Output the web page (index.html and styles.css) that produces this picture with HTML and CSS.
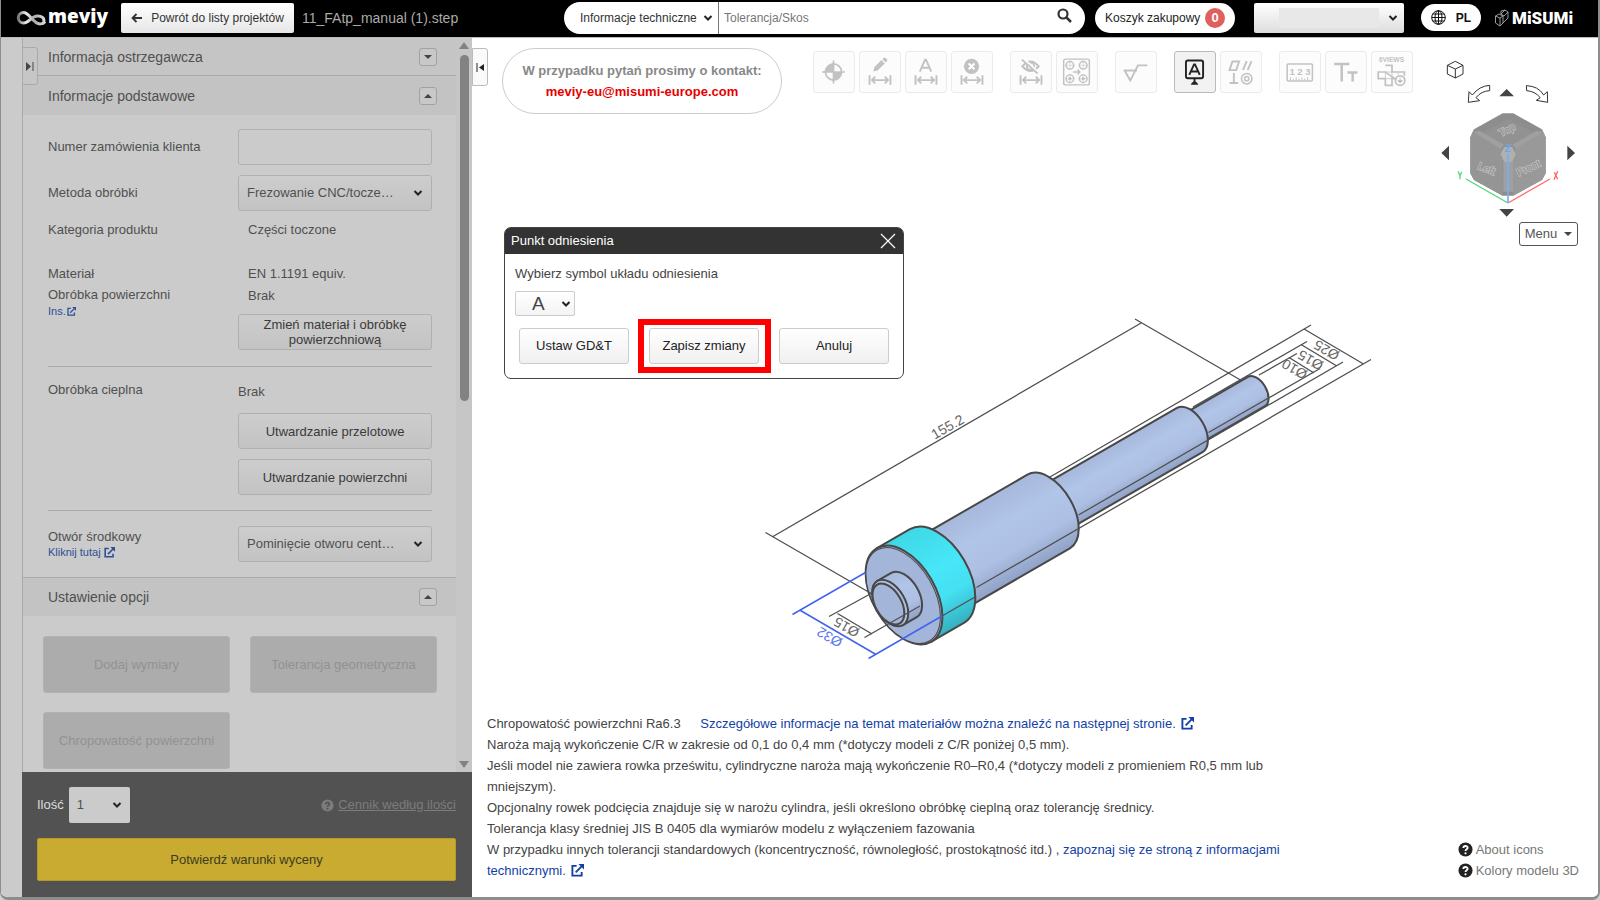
FILE: index.html
```html
<!DOCTYPE html>
<html lang="pl">
<head>
<meta charset="utf-8">
<title>meviy</title>
<link rel="stylesheet" href="styles.css">
</head>
<body>
<svg class="defs" aria-hidden="true">
  <symbol id="chev" viewBox="0 0 10 8"><path d="M1.5 2 5 5.5 8.5 2" fill="none" stroke="currentColor" stroke-width="2"/></symbol>
  <symbol id="ext" viewBox="0 0 14 14"><path d="M6 2H1.500V12.500H11.500V8.500" fill="none" stroke="currentColor" stroke-width="2"/><path d="M5 9 11.500 2.500" stroke="currentColor" stroke-width="2"/><path d="M8 0H14V6Z" fill="currentColor"/></symbol>
  <symbol id="help" viewBox="0 0 16 16"><circle cx="8" cy="8" r="7.500" fill="currentColor"/><path d="M5.700 6.400C5.700 3.600 10.300 3.700 10.300 6.200 10.300 7.800 8 7.700 8 9.600" fill="none" stroke="var(--mark)" stroke-width="2"/><circle cx="8" cy="12" r="1.200" fill="var(--mark)"/></symbol>
  <symbol id="dim" viewBox="0 0 42 42"><path d="M10 24.500V34.500M32 24.500V34.500M12 29.500H30M16 26 12.500 29.500 16 33M26 26 29.500 29.500 26 33" fill="none" stroke="currentColor" stroke-width="2"/></symbol>
</svg>
<div class="window">
  <header class="topbar">
    <a class="logo" href="#" aria-label="meviy">
      <svg width="30" height="16" viewBox="0 0 30 16"><defs><linearGradient id="lg" x1="0" x2="1"><stop offset="0" stop-color="#777"/><stop offset=".3" stop-color="#eee"/><stop offset=".6" stop-color="#aaa"/><stop offset="1" stop-color="#ddd"/></linearGradient></defs><path d="M29 11.500C27 14.500 22.500 14.500 20 12.500M20 12.500C14 8 12 2.500 7.500 2.500A5.200 5.200 0 0 0 7.500 13C13.500 13 15 6 21.500 6 26 6 29 8.500 27.500 12" fill="none" stroke="url(#lg)" stroke-width="3"/></svg><span>meviy</span>
    </a>
    <button class="back" type="button"><svg width="11" height="10" viewBox="0 0 11 10"><path d="M11 5H2M5.500 1 1.500 5 5.500 9" fill="none" stroke="currentColor" stroke-width="1.800"/></svg>Powrót do listy projektów</button>
    <span class="file">11_FAtp_manual (1).step</span>
    <form class="search" role="search">
      <span class="pick scope"><select aria-label="Zakres"><option>Informacje techniczne</option></select><svg width="10" height="8"><use href="#chev"/></svg></span>
      <input type="text" aria-label="Szukaj" placeholder="Tolerancja/Skos">
      <button type="button" aria-label="Szukaj"><svg width="15" height="15" viewBox="0 0 15 15"><circle cx="6" cy="6" r="4.500" fill="none" stroke="#333" stroke-width="2.200"/><path d="M9.500 9.500 14 14" stroke="#333" stroke-width="2.500"/></svg></button>
    </form>
    <button class="basket" type="button">Koszyk zakupowy<span class="badge">0</span></button>
    <span class="pick account"><select aria-label="Konto"><option></option></select><i class="mask"></i><svg width="10" height="8"><use href="#chev"/></svg></span>
    <button class="lang" type="button"><svg width="15" height="15" viewBox="0 0 15 15" fill="none" stroke="#111"><circle cx="7.500" cy="7.500" r="6.800"/><ellipse cx="7.500" cy="7.500" rx="3.500" ry="6.800"/><path d="M.7 7.500H14.300M7.500 .7V14.300M1.700 4H13.300M1.700 11H13.300"/></svg>PL</button>
    <a class="misumi" href="#"><svg width="14" height="18" viewBox="0 0 14 18" fill="none" stroke="#aaa" stroke-width=".9"><path d="M.5 7 4 5 8 7V14L5 17 .5 14ZM.5 7 5 9 8 7M5 9V17M6 5 10 1 13 3 9 7ZM13 3V9L8 14M6 5V2L10 1"/></svg><span>MiSUMi</span></a>
  </header>

  <div class="body">
    <div class="rail"></div>
    <aside class="side">
      <button class="tab tab-left" type="button" aria-label="Rozwiń panel"><svg width="8" height="9" viewBox="0 0 8 9"><path d="M0 0 5 4.500 0 9Z" fill="#444"/><path d="M7 0V9" stroke="#444"/></svg></button>
      <div class="scroller">
        <div class="content">
          <h2 class="sec sec-line">Informacja ostrzegawcza<button type="button" aria-label="Rozwiń"><i class="tri down"></i></button></h2>
          <h2 class="sec">Informacje podstawowe<button type="button" aria-label="Zwiń"><i class="tri up"></i></button></h2>
          <div class="group first">
            <div class="row tall"><label for="order">Numer zamówienia klienta</label><input id="order" type="text" class="box"></div>
            <div class="row tall method"><label for="method">Metoda obróbki</label><span class="pick box grad"><select id="method"><option>Frezowanie CNC/tocze…</option></select><svg width="10" height="8"><use href="#chev"/></svg></span></div>
            <div class="row cat"><span>Kategoria produktu</span><span class="val">Części toczone</span></div>
            <div class="row mat">
              <div><p>Materiał</p><p>Obróbka powierzchni</p><a href="#" class="mini">Ins.<svg width="9" height="9"><use href="#ext"/></svg></a></div>
              <div><p class="val">EN 1.1191 equiv.</p><p class="val brak">Brak</p><button type="button" class="box grad btn">Zmień materiał i obróbkę powierzchniową</button></div>
            </div>
          </div>
          <div class="group heat">
            <div class="row"><span>Obróbka cieplna</span><div class="stack"><span class="none">Brak</span><button type="button" class="box grad btn">Utwardzanie przelotowe</button><button type="button" class="box grad btn">Utwardzanie powierzchni</button></div></div>
          </div>
          <div class="group hole">
            <div class="row"><div class="lab"><label for="hole">Otwór środkowy</label><a href="#" class="mini">Kliknij tutaj <svg width="11" height="11"><use href="#ext"/></svg></a></div><span class="pick box grad"><select id="hole"><option>Pominięcie otworu cent…</option></select><svg width="10" height="8"><use href="#chev"/></svg></span></div>
          </div>
          <h2 class="sec sec-top">Ustawienie opcji<button type="button" aria-label="Zwiń"><i class="tri up"></i></button></h2>
          <div class="options"><button type="button" disabled>Dodaj wymiary</button><button type="button" disabled>Tolerancja geometryczna</button><button type="button" disabled>Chropowatość powierzchni</button></div>
        </div>
        <div class="bar"><i class="arrow-up"></i><i class="thumb"></i><i class="arrow-down"></i></div>
      </div>
      <div class="quote">
        <div class="qty"><label for="qty">Ilość</label><span class="pick"><select id="qty"><option>1</option></select><svg width="10" height="8"><use href="#chev"/></svg></span><a href="#"><svg width="13" height="13"><use href="#help"/></svg><u>Cennik według ilości</u></a></div>
        <button type="button" class="confirm">Potwierdź warunki wyceny</button>
      </div>
    </aside>

    <main class="viewer">
      <button class="tab tab-right" type="button" aria-label="Zwiń panel"><svg width="8" height="9" viewBox="0 0 8 9"><path d="M8 1 3 4.500 8 8Z" fill="#222"/><path d="M1 0V9" stroke="#222"/></svg></button>
      <div class="tools">
        <div class="contact"><b>W przypadku pytań prosimy o kontakt:</b><a href="#">meviy-eu@misumi-europe.com</a></div>
        <div class="toolbar">
          <div class="tg">
            <button type="button" aria-label="Punkt zerowy"><svg viewBox="0 0 42 42"><circle cx="20.500" cy="21" r="8.500" fill="none" stroke="currentColor" stroke-width="1.800"/><path d="M20.500 21V12.500A8.500 8.500 0 0 0 12 21ZM20.500 21V29.500A8.500 8.500 0 0 0 29 21Z" fill="currentColor"/><path d="M20.500 9V33M8.500 21H32.500" stroke="currentColor" stroke-width="1.800"/></svg></button>
            <button type="button" aria-label="Edytuj wymiar"><svg viewBox="0 0 42 42"><use href="#dim"/><path d="M14 20.500 15 16 22.500 8.500 26 12 18.500 19.500ZM23.500 7.500 25 6Q26.500 5.500 28.500 7.500 29 9 28 10L27 11Z" fill="currentColor"/></svg></button>
            <button type="button" aria-label="Wymiar automatyczny"><svg viewBox="0 0 42 42"><use href="#dim"/><path d="M14.500 20.500 20 8H21L26.500 20.500M16.500 16.500H24.500" fill="none" stroke="currentColor" stroke-width="2"/></svg></button>
            <button type="button" aria-label="Usuń wymiar"><svg viewBox="0 0 42 42"><use href="#dim"/><circle cx="20.500" cy="15" r="8" fill="currentColor"/><path d="M17.500 12 23.500 18M23.500 12 17.500 18" stroke="#fff" stroke-width="2.200"/></svg></button>
          </div>
          <div class="tg">
            <button type="button" aria-label="Ukryj wymiary"><svg viewBox="0 0 42 42"><use href="#dim"/><path d="M12 15Q20.500 5 29 15 20.500 25 12 15Z" fill="none" stroke="currentColor" stroke-width="2.200"/><circle cx="20.500" cy="15" r="3.800" fill="none" stroke="currentColor" stroke-width="2"/><path d="M12.500 7 29 22" stroke="#fff" stroke-width="3"/><path d="M11.500 8 28 22.500" stroke="currentColor" stroke-width="2"/></svg></button>
            <button type="button" aria-label="Otwory"><svg viewBox="0 0 42 42" fill="none" stroke="currentColor" stroke-width="1.500"><rect x="7" y="7.500" width="27" height="27" rx="2"/><circle cx="13.500" cy="14" r="4"/><circle cx="27.500" cy="14" r="4"/><circle cx="13.500" cy="28" r="4"/><circle cx="27.500" cy="28" r="4"/><circle cx="13.500" cy="28" r="1"/><circle cx="27.500" cy="28" r="1"/><path d="M17 21H24M21.500 18.500 24 21 21.500 23.500"/><path d="M8.500 14H18.500M13.500 9V19M22.500 14H32.500M27.500 9V19M8.500 28H18.500M13.500 23V33M22.500 28H32.500M27.500 23V33" stroke-width=".5"/></svg></button>
          </div>
          <div class="tg"><button type="button" aria-label="Chropowatość"><svg viewBox="0 0 42 42"><path d="M8 19.500H22M9 19.500 15 30 23 14H33" fill="none" stroke="currentColor" stroke-width="2"/></svg></button></div>
          <div class="tg">
            <button type="button" class="on" aria-label="Punkt odniesienia"><svg viewBox="0 0 42 42"><rect x="11.500" y="9" width="18" height="18.500" rx="2" fill="none" stroke="currentColor" stroke-width="2"/><path d="M15 24 20 13H21L26 24M17 20.500H24" fill="none" stroke="currentColor" stroke-width="2"/><path d="M20.500 28V32" stroke="currentColor" stroke-width="2"/><path d="M16.500 34.500 18 32 20.500 30.500 23 32 24.500 34.500Z" fill="currentColor"/></svg></button>
            <button type="button" aria-label="Tolerancja geometryczna"><svg viewBox="0 0 42 42" fill="none" stroke="currentColor" stroke-width="2"><path d="M9 19 12 10H19L16 19ZM23 19 27 9.500M28 19 32 9.500M13.500 22V32M9 32.500H18"/><circle cx="27" cy="28" r="5.500" stroke-width="1.600"/><circle cx="27" cy="28" r="2.200" stroke-width="1.600"/></svg></button>
          </div>
          <div class="tg">
            <button type="button" aria-label="Pomiar"><svg viewBox="0 0 42 42"><rect x="7.500" y="12.500" width="26.500" height="18" rx="1" fill="none" stroke="currentColor" stroke-width="1.600"/><path d="M11 30V26.500M14 30V28M17 30V26.500M20 30V28M23 30V26.500M26 30V28M29 30V26.500" stroke="currentColor"/><text x="21" y="24" text-anchor="middle" class="t123">1 2 3</text></svg></button>
            <button type="button" aria-label="Tekst"><svg viewBox="0 0 42 42"><path d="M8.500 12.500H24.500M16.500 12V31M22.500 21.500H33M28 21V31" fill="none" stroke="currentColor" stroke-width="2.600"/></svg></button>
            <button type="button" aria-label="6 widoków"><svg viewBox="0 0 42 42"><text x="20.500" y="11" text-anchor="middle" class="t6">6VIEWS</text><path d="M14 14H21V21H34V25M24 28H21V35H14V28H6.500V21H14Z" fill="none" stroke="currentColor" stroke-width="1.800"/><path d="M14 21H21V28H14ZM27.500 21V24" fill="none" stroke="currentColor" stroke-width=".8"/><circle cx="29.500" cy="30" r="5" fill="none" stroke="currentColor" stroke-width="1.800"/><path d="M29.500 27V30.500M27 30H32L29.500 32.500Z" fill="currentColor" stroke="currentColor"/></svg></button>
          </div>
        </div>
      </div>

      <svg class="part" width="640" height="370" viewBox="0 0 640 370" role="img" aria-label="Model 3D wału">
        <defs>
          <linearGradient id="steel" x1="0" y1="0" x2="0" y2="1"><stop offset="0" stop-color="#a6b8db"/><stop offset=".35" stop-color="#b1c5e8"/><stop offset=".7" stop-color="#adc0e3"/><stop offset="1" stop-color="#8fa1c5"/></linearGradient>
          <linearGradient id="cyan" x1="0" y1="0" x2="0" y2="1"><stop offset="0" stop-color="#3fd9e6"/><stop offset=".45" stop-color="#47e6f8"/><stop offset=".7" stop-color="#45e0f2"/><stop offset="1" stop-color="#35b0c0"/></linearGradient>
        </defs>
        <g class="ln"><path d="M300 177 561 25M443 107 557 41.500M509 75 547 53.500"/></g>
        <g transform="translate(154 295) rotate(-30)" class="solid">
          <path d="M325-17H407A9.900 17 0 0 1 407 17H325Z" fill="url(#steel)"/>
          <path d="M162-25.500H330A14.800 25.500 0 0 1 330 25.500H162Z" fill="url(#steel)"/>
          <path d="M30-42.500H167A24.600 42.500 0 0 1 167 42.500H30Z" fill="url(#steel)"/>
          <path d="M0-54H38A31.500 54 0 0 1 38 54H0Z" fill="url(#cyan)"/>
          <ellipse cx="0" cy="0" rx="31.500" ry="54" fill="#9fb1d3"/>
          <ellipse cx="-1" cy="0" rx="30.500" ry="52.500" fill="#a3b5d8" stroke-width="1"/>
          <path d="M0-25.500H-16A14.800 25.500 0 0 0-16 25.500H0A14.800 25.500 0 0 0 0-25.500Z" fill="#a9bcdf" stroke="none"/>
          <path d="M-16-25.500H0A14.800 25.500 0 0 1 0 25.500H-16Z" fill="url(#steel)"/>
          <ellipse cx="-16" cy="0" rx="14.800" ry="25.500" fill="#adc0e3"/>
          <ellipse cx="-18" cy="0" rx="13" ry="22.500" fill="#a3b5d8"/>
        </g>
        <g class="ln">
          <path d="M23 236.500 392 22.500M15.500 232.500 122 294M385 19 490.500 80"/>
          <path d="M554 29 613.500 64M621 59.500 226.500 287.500M551 44.500 586 65.500M593 62 328.500 215M539 57.500 564 73M570 68.500 458.500 132.500"/>
          <path d="M79 316.500 122 293M87.500 313.500 122 334M114.500 337.500 170 306M192 316 225 297"/>
        </g>
        <path class="blue" d="M42.500 314.500 115.500 272.500M50.500 310.500 126 354.500M118.500 358.500 192 316"/>
        <g class="dimtext">
          <text transform="translate(200 131) rotate(-30)">155.2</text>
          <text transform="translate(579 46) rotate(210)">Ø25</text>
          <text transform="translate(563 56) rotate(210)">Ø15</text>
          <text transform="translate(547 65) rotate(210)">Ø10</text>
          <text transform="translate(99 323) rotate(210)">Ø15</text>
          <text class="bt" transform="translate(82 333) rotate(210)">Ø32</text>
        </g>
      </svg>

      <div class="nav">
        <svg width="160" height="170" viewBox="0 0 480 510">
          <g fill="none" stroke="#333" stroke-width="3"><path d="M52 46 76 34 99 46V72L76 84 52 72ZM52 46 76 57 99 46M76 57V84"/><path d="M179 106Q148 108 127 135L117 125 115 157 149 152 138 143Q154 123 179 122ZM289 107Q325 108 341 135L352 125 353 157 319 151 331 143Q315 124 290 122Z"/></g>
          <path d="M208 139 230 117 252 139ZM208 477 230 500 252 477ZM57 287 34 309 57 331ZM412 287 435 309 412 331Z" fill="#444"/>
          <path d="M218 190H250L336 238 347 262V370L336 390 250 437H218L132 390 121 370V262L132 238Z" fill="#8d8d8d"/>
          <path d="M234 206 320 254 234 300 148 254Z" fill="#929292"/><path d="M121 262 132 238 215 290 218 332V437L132 390 121 370Z" fill="#959595"/><path d="M347 262 336 238 255 290 250 332V437L336 390 347 370Z" fill="#999"/>
          <path d="M134 248 148 242 222 284 212 296ZM334 248 320 242 248 284 258 296ZM220 332H250V425H220Z" fill="#a0a0a0"/>
          <path d="M222 291H247L257 313 247 335H222L212 313Z" fill="#b0b0b0"/>
          <g class="face"><text transform="translate(236 249) rotate(-27)">Top</text><text transform="translate(166 366) rotate(22)">Left</text><text transform="translate(300 364) rotate(-25)">Front</text></g>
          <path d="M108 387 234 459" stroke="#4fd873" stroke-width="4"/><path d="M360 387 234 459" stroke="#ff6b6b" stroke-width="4"/><path d="M234 310V459" stroke="#72b2f2" stroke-width="5"/>
          <g fill="none" stroke-width="4"><path d="M227 285H242L227 304H242" stroke="#67a8f0"/><path d="M84 364 90 377 95 366M90 377V388" stroke="#4fd873"/><path d="M373 367 383 388M383 364 372 389" stroke="#f66"/></g>
        </svg>
        <button type="button" class="menu">Menu<i class="tri down"></i></button>
      </div>

      <section class="dialog" role="dialog" aria-labelledby="dt">
        <header><span id="dt">Punkt odniesienia</span><button type="button" aria-label="Zamknij"><svg width="16" height="16" viewBox="0 0 16 16"><path d="M1 1 15 15M15 1 1 15" stroke="#fff" stroke-width="1.200"/></svg></button></header>
        <div class="dbody">
          <label for="datum">Wybierz symbol układu odniesienia</label>
          <span class="pick datum"><select id="datum"><option>A</option></select><svg width="10" height="8"><use href="#chev"/></svg></span>
          <div class="actions"><button type="button">Ustaw GD&amp;T</button><button type="button" class="marked">Zapisz zmiany</button><button type="button">Anuluj</button></div>
        </div>
      </section>

      <div class="foot">
        <div class="notes">
          <p>Chropowatość powierzchni Ra6.3 <a href="#" class="more">Szczegółowe informacje na temat materiałów można znaleźć na następnej stronie. <svg width="13" height="13"><use href="#ext"/></svg></a></p>
          <p>Naroża mają wykończenie C/R w zakresie od 0,1 do 0,4 mm (*dotyczy modeli z C/R poniżej 0,5 mm).</p>
          <p>Jeśli model nie zawiera rowka prześwitu, cylindryczne naroża mają wykończenie R0–R0,4 (*dotyczy modeli z promieniem R0,5 mm lub mniejszym).</p>
          <p>Opcjonalny rowek podcięcia znajduje się w narożu cylindra, jeśli określono obróbkę cieplną oraz tolerancję średnicy.</p>
          <p>Tolerancja klasy średniej JIS B 0405 dla wymiarów modelu z wyłączeniem fazowania</p>
          <p>W przypadku innych tolerancji standardowych (koncentryczność, równoległość, prostokątność itd.) , <a href="#">zapoznaj się ze stroną z informacjami technicznymi. <svg width="13" height="13"><use href="#ext"/></svg></a></p>
        </div>
        <div class="helps"><a href="#"><svg width="15" height="15"><use href="#help"/></svg>About icons</a><a href="#"><svg width="15" height="15"><use href="#help"/></svg>Kolory modelu 3D</a></div>
      </div>
    </main>
  </div>
</div>
</body>
</html>
```

FILE: styles.css
```css
* { box-sizing: border-box; }
body { margin: 0; background: #d0d0d0; font: 13px/18px "Liberation Sans", Arial, sans-serif; color: #444; }
button, select, input { font: inherit; color: inherit; margin: 0; }
button { cursor: pointer; padding: 0; }
a { text-decoration: none; color: #123fa6; }
p, h2 { margin: 0; }
svg { flex: none; }
.defs { position: absolute; width: 0; height: 0; }
.window { display: flex; flex-direction: column; height: 100vh; border: solid #8d8d8d; border-width: 0 2px 3px 1px; border-radius: 0 0 8px 8px; background: #fff; overflow: hidden; }

.pick { position: relative; display: inline-flex; align-items: center; }
.pick select { appearance: none; width: 100%; height: 100%; border: 0; background: none; padding: 0 8px; }
.pick > svg { position: absolute; right: 8px; pointer-events: none; color: #222; }

.topbar { display: flex; align-items: center; flex: none; height: 37px; background: #000; padding: 0 26px 2px 15px; }
.logo { display: flex; align-items: center; gap: 2px; width: 105px; color: #fff; }
.logo span { font: 800 19px/24px "Open Sans", sans-serif; margin-top: -3px; }
.back { display: flex; align-items: center; justify-content: center; gap: 9px; width: 173px; height: 30px; border: 0; border-radius: 2px; background: linear-gradient(#fff, #e6e6e6); color: #333; font-size: 12px; }
.file { width: 262px; margin-left: 8px; flex: none; font-size: 14px; color: #aaa; }
.search { display: flex; flex: 1; min-width: 300px; height: 32px; border-radius: 16px; background: #fff; overflow: hidden; font-size: 12px; }
.scope { width: 155px; border-right: 1px solid #777; color: #333; }
.scope select { padding-left: 16px; }
.scope > svg { right: 5px; }
.search input { flex: 1; min-width: 0; border: 0; background: none; padding: 0 5px; }
.search input::placeholder { color: #777; opacity: 1; }
.search button { width: 42px; border: 0; background: none; }
.basket { display: flex; align-items: center; justify-content: space-between; width: 140px; height: 30px; margin-left: 10px; padding: 0 10px; border: 0; border-radius: 15px; background: #fff; color: #222; white-space: nowrap; font-size: 12px; }
.badge { width: 20px; height: 20px; border-radius: 50%; background: #e06060; color: #fff; font: bold 13px/20px "Liberation Sans", sans-serif; }
.account { width: 150px; height: 30px; margin-left: 19px; border-radius: 2px; background: linear-gradient(#fff, #ddd); }
.account > svg { right: 6px; }
.mask { position: absolute; left: 25px; width: 100px; height: 20px; background: #e8e8e8; pointer-events: none; }
.lang { display: flex; align-items: center; justify-content: center; gap: 10px; width: 60px; height: 27px; margin-left: 17px; border: 0; border-radius: 14px; background: #fff; color: #111; font-size: 12px; font-weight: bold; }
.misumi { display: flex; align-items: center; gap: 3px; width: 77px; margin-left: 14px; color: #fff; }
.misumi span { font: 900 17px/20px Roboto, sans-serif; }

.body { display: flex; flex: 1; min-height: 0; border-top: 1px solid #bbb; }
.rail { flex: none; width: 21px; background: #cbcbcb; }
.side { position: relative; flex: none; display: flex; flex-direction: column; width: 450px; border-left: 1px solid #aaa; background: #cbcbcb; color: #505050; }
.scroller { display: flex; flex: 1; min-height: 0; overflow: hidden; }
.content { flex: 1; overflow: hidden; }
.bar { display: flex; flex-direction: column; align-items: center; width: 16px; padding: 4px 0 4px; background: #c6c6c6; }
.arrow-up, .arrow-down { border: 5px solid transparent; }
.arrow-up { border-bottom: 7px solid #828282; border-top: 0; }
.arrow-down { border-top: 7px solid #828282; border-bottom: 0; margin-top: auto; }
.thumb { width: 9px; height: 346px; margin-top: 6px; border-radius: 5px; background: #828282; }
.tab { position: absolute; z-index: 2; top: 10px; display: flex; align-items: center; justify-content: center; width: 16px; height: 38px; border: 1px solid #aaa; }
.tab-left { left: -1px; top: 9px; border-radius: 0 3px 3px 0; background: #c6c6c6; }
.tab-right { left: 0; border-color: #bbb; border-radius: 0 3px 3px 0; background: #fafafa; }
.sec { display: flex; align-items: center; justify-content: space-between; height: 39px; padding: 0 19px 0 25px; background: #c3c3c3; font-size: 14px; font-weight: normal; }
.sec-line { height: 38px; border-bottom: 1px solid #aaa; background: #c5c5c5; }
.sec-top { border-top: 1px solid #aaa; }
.sec button { display: flex; align-items: center; justify-content: center; width: 18px; height: 18px; border: 1px solid #a2a2a2; border-radius: 3px; background: #c8c8c8; }
.tri { border: 4px solid transparent; }
.tri.down { border-top-color: #444; border-bottom: 0; }
.tri.up { border-bottom-color: #444; border-top: 0; }
.group { margin: 0 24px 0 25px; border-bottom: 1px solid #aaa; }
.row { display: grid; grid-template-columns: 190px 1fr; }
.first { padding: 14px 0 16px; }
.tall { align-items: center; margin-bottom: 10px; }
.box { width: 100%; height: 36px; border: 1px solid #b0b0b0; border-radius: 3px; background: #cbcbcb; }
.grad { background: linear-gradient(#cdcdcd, #c3c3c3); }
.btn { color: #3a3a3a; line-height: 15px; }
.val { padding-left: 10px; }
.cat { padding-bottom: 24px; }
.mat p { line-height: 21px; }
.mat .brak { line-height: 24px; }
.mat .btn { margin-top: 6px; display: block; }
.mini { display: flex; align-items: center; font-size: 11px; line-height: 12px; color: #2c4f96; gap: 3px; }
.mat .mini { gap: 1px; }
.heat { padding: 14px 0 15px; }
.stack { display: flex; flex-direction: column; gap: 10px; }
.none { margin: 2px 0; }
.hole { padding: 15px 0; border: 0; }
.hole .lab { padding-top: 2px; }
.options { display: grid; grid-template-columns: 1fr 1fr; gap: 19px 20px; padding: 20px 19px 0 20px; }
.options button { height: 57px; border: 1px solid #b2b2b2; border-radius: 3px; background: #acacac; color: #929292; }
.quote { flex: none; height: 125px; margin-left: -1px; padding: 15px 16px 0 15px; background: #525252; }
.qty { display: flex; align-items: center; gap: 5px; color: #ddd; }
.qty .pick { width: 61px; height: 36px; border-radius: 2px; background: #cbcbcb; color: #505050; }
.qty a { display: flex; align-items: center; gap: 4px; margin-left: auto; color: #7c7c7c; --mark: #525252; }
.confirm { width: 100%; height: 43px; margin-top: 15px; border: 1px solid #b59a28; border-radius: 2px; background: #c8ab30; color: #3c3c20; }

.viewer { position: relative; flex: 1; min-width: 0; display: flex; flex-direction: column; justify-content: space-between; background: #fff; }
.tools { display: flex; align-items: flex-start; padding: 10px 0 0 30px; }
.contact { display: flex; flex-direction: column; align-items: center; justify-content: center; flex: none; width: 280px; height: 66px; border: 1px solid #ccc; border-radius: 33px; line-height: 21px; }
.contact b { color: #888; }
.contact a { color: #e60000; font-weight: bold; }
.toolbar { display: flex; gap: 17px; margin: 3px 0 0 31px; }
.tg { display: flex; gap: 4px; }
.toolbar button { width: 42px; height: 42px; border: 1px solid #ebebeb; border-radius: 3px; background: #fcfcfc; color: #c2c2c2; }
.toolbar button svg { display: block; width: 40px; height: 40px; }
.toolbar .on { border-color: #bbb; background: #f2f2f2; color: #222; }
.t123 { font: bold 10px "Liberation Sans", sans-serif; fill: currentColor; }
.t6 { font: bold 7px "Liberation Sans", sans-serif; fill: currentColor; }

.part { position: absolute; left: 278px; top: 262px; pointer-events: none; }
.solid { stroke: #484848; stroke-width: 2; }
.ln { fill: none; stroke: #505050; stroke-width: 1.3; }
.blue { fill: none; stroke: #4164f0; stroke-width: 1.5; }
.dimtext { font: 14px "Liberation Sans", sans-serif; fill: #666; text-anchor: middle; }
.bt { fill: #5876f0; }
.nav { position: absolute; right: 8px; top: 12px; width: 160px; display: flex; flex-direction: column; align-items: flex-end; }
.face { font: 32px "Liberation Sans", sans-serif; fill: #8b8b8b; stroke: #c4c4c4; stroke-width: 4; paint-order: stroke; text-anchor: middle; }
.menu { display: flex; align-items: center; justify-content: center; gap: 7px; width: 59px; height: 24px; margin: 2px 12px 0 0; border: 1px solid #555; border-radius: 3px; background: #fff; color: #555; }

.dialog { position: absolute; left: 32px; top: 189px; width: 400px; border: 1px solid #444; border-radius: 7px; background: #fff; }
.dialog header { display: flex; align-items: center; justify-content: space-between; height: 26px; padding: 0 7px 0 6px; border-radius: 5px 5px 0 0; background: #333; color: #fff; }
.dialog header button { display: flex; border: 0; background: none; }
.dbody { padding: 11px 14px 14px 10px; }
.dbody label { display: block; }
.datum { width: 60px; height: 25px; margin-top: 8px; border: 1px solid #ccc; border-radius: 2px; background: linear-gradient(#fff, #f3f3f3); font-size: 19px; }
.datum select { padding-left: 16px; }
.datum > svg { right: 3px; }
.actions { display: flex; gap: 20px; margin: 12px 0 0 4px; }
.actions button { flex: 1; height: 36px; border: 1px solid #ccc; border-radius: 3px; background: linear-gradient(#fff, #f0f0f0); color: #222; }
.actions .marked { position: relative; }
.marked::after { content: ""; position: absolute; inset: -10px -13px -10px -12px; border: 6px solid #f00; }

.foot { display: flex; justify-content: space-between; align-items: flex-end; padding: 0 19px 16px 15px; }
.notes { max-width: 800px; line-height: 21px; }
.notes svg { vertical-align: -2px; margin-left: 2px; }
.more { margin-left: 16px; }
.helps { display: flex; flex-direction: column; line-height: 21px; }
.helps a { display: flex; align-items: center; gap: 3px; color: #777; }
.helps svg { color: #222; --mark: #fff; }
```
